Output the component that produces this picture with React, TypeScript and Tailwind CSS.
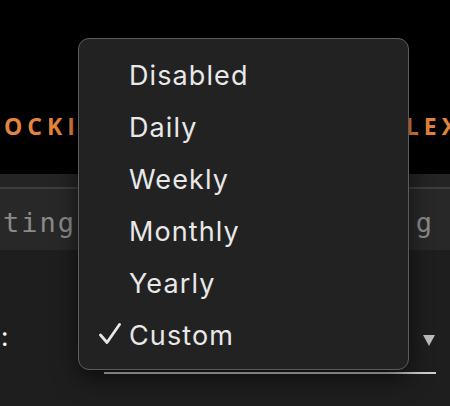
const options = ["Disabled", "Daily", "Weekly", "Monthly", "Yearly", "Custom"];

function Tick() {
  return (
    <svg viewBox="0 0 22 21" className="absolute left-[20px] top-[14px] h-[21px] w-[22px]" fill="none">
      <path d="M1.5 12 L8 19.5 L20.5 1.5" stroke="#e8e8e8" strokeWidth="2.8" strokeLinecap="round" strokeLinejoin="round" />
    </svg>
  );
}

function RepeatMenu({ selected }: { selected: string }) {
  return (
    <div className="absolute left-[78px] top-[38px] flex h-[332px] w-[331px] flex-col rounded-[11px] border border-[#5c5c5c] bg-[#222222] pt-[10px] shadow-[0_8px_24px_rgba(0,0,0,0.6)]">
      {options.map((opt) => (
        <div key={opt} className="relative flex h-[52px] items-center pl-[50px] text-[27px] leading-none tracking-[1.1px] text-[#e8e8e8]">
          {opt === selected && <Tick />}
          <span>{opt}</span>
        </div>
      ))}
    </div>
  );
}

export default function App() {
  return (
    <div className="relative h-[406px] w-[450px] overflow-hidden bg-[#1e1e1e] font-['Inter',sans-serif]">
      <div className="flex h-[174px] items-end bg-black pb-[36px]">
        <div className="flex w-full items-center font-['Open_Sans',sans-serif] text-[23px] font-bold leading-none tracking-[5px] text-[#e5843d]">
          <span className="pl-[4px]">OCKING</span>
          <span className="-mr-[12px] ml-auto">FLEX</span>
        </div>
      </div>
      <div className="h-[76px] bg-[#282828]">
        <div className="h-[15px] border-b-2 border-[#3e3e3e] bg-[#242424]" />
        <div className="flex items-center pt-[20px] font-['DejaVu_Sans_Mono',monospace] text-[27px] leading-none tracking-[2px] text-[#8a8a8a]">
          <span className="pl-[3px]">ting</span>
          <span className="ml-auto pr-[16px]">g</span>
        </div>
      </div>
      <div className="flex items-start pt-[74px]">
        <span className="pl-[1px] text-[26px] leading-none text-white">:</span>
      </div>
      <div className="absolute left-[104px] top-[372px] h-[2px] w-[332px] bg-[#cfcfcf]" />
      <div className="absolute left-[423px] top-[335px] h-0 w-0 border-x-[6px] border-t-[11px] border-x-transparent border-t-[#bdbdbd]" />
      <RepeatMenu selected="Custom" />
    </div>
  );
}
